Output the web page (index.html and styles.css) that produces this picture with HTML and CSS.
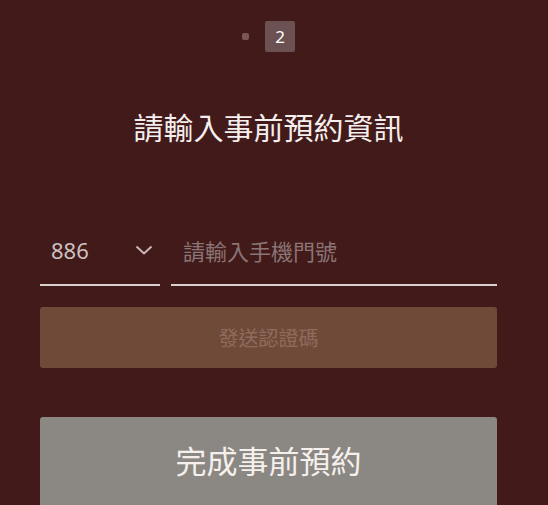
FILE: index.html
```html
<!DOCTYPE html>
<html>
<head>
    <title>事前預約</title>
    <link rel="stylesheet" href="styles.css">
</head>
<body>
    <div class="booking">
        <div class="steps">
            <span class="step-dot"></span>
            <span class="step-current">2</span>
        </div>

        <h2 class="title">請輸入事前預約資訊</h2>

        <div class="phone-row">
            <div class="country-code">
                <span>886</span>
                <svg class="chevron" width="18" height="10" viewBox="0 0 18 10">
                    <path d="M1.5 1.5 L9 8.5 L16.5 1.5" fill="none" stroke="currentColor" stroke-width="2"/>
                </svg>
            </div>
            <div class="phone-field">
                <input type="text" class="phone-input" placeholder="請輸入手機門號">
            </div>
        </div>

        <button class="btn btn-send">發送認證碼</button>
        <button class="btn btn-done">完成事前預約</button>
    </div>
</body>
</html>
```

FILE: styles.css
```css
body {
    margin: 0;
    padding: 0;
    background: #421a1a;
    font-family: "Noto Sans", "Noto Sans CJK TC", sans-serif;
    overflow: hidden;
}
.booking {
    display: flex;
    flex-direction: column;
    padding: 21px 51px 0 40px;
}
.steps {
    display: flex;
    align-items: center;
    justify-content: center;
    gap: 16px;
    height: 31px;
}
.step-dot {
    width: 7px;
    height: 7px;
    border-radius: 2px;
    background: #7b5656;
}
.step-current {
    width: 30px;
    height: 31px;
    border-radius: 2px;
    background: #6c5152;
    color: #fff;
    font-size: 17px;
    line-height: 31px;
    text-align: center;
}
.title {
    margin: 54px 0 0;
    color: #f4eeee;
    font-family: "Noto Sans CJK TC", sans-serif;
    font-size: 30px;
    font-weight: 400;
    line-height: 40px;
    text-align: center;
}
.phone-row {
    display: flex;
    gap: 11px;
    margin-top: 89px;
}
.country-code, .phone-field {
    display: flex;
    align-items: center;
    height: 30px;
    padding-bottom: 19px;
    border-bottom: 2px solid #d9d0d0;
}
.country-code {
    width: 109px;
    padding-left: 11px;
    justify-content: space-between;
    color: #cdc1c1;
    font-size: 22px;
}
.chevron {
    margin-right: 7px;
    color: #c8baba;
}
.phone-field {
    flex: 1;
}
.phone-input {
    width: 100%;
    border: 0;
    outline: 0;
    padding: 0 0 0 12px;
    background: transparent;
    color: #e8e0e0;
    font-family: "Noto Sans CJK TC", sans-serif;
    font-size: 22px;
}
.phone-input::placeholder {
    color: #8a7575;
}
.btn {
    border: 0;
    border-radius: 3px;
    font-family: "Noto Sans CJK TC", sans-serif;
    cursor: pointer;
}
.btn-send {
    height: 61px;
    margin-top: 21px;
    background: #6f4a38;
    color: #8f6b5f;
    font-size: 20px;
}
.btn-done {
    height: 100px;
    margin-top: 49px;
    padding-bottom: 16px;
    background: #8b8884;
    color: #f5f0ec;
    font-size: 31px;
}
```
